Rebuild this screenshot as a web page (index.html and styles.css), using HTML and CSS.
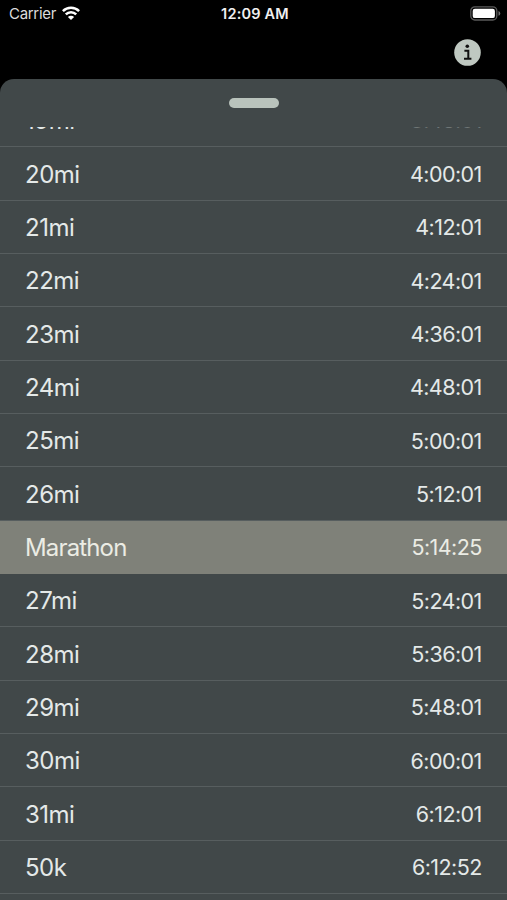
FILE: index.html
```html
<!DOCTYPE html>
<html lang="en">
<head>
<meta charset="utf-8">
<title>Race splits</title>
<link rel="stylesheet" href="styles.css">
</head>
<body>
<header class="status">
  <div class="carrier"><span>Carrier</span>
    <svg class="wifi" width="18" height="14" viewBox="0 0 18 14"><g fill="none" stroke="#fff" stroke-width="2.5"><path d="M.9 5.1a11.5 11.5 0 0 1 16.2 0"/><path d="M3.8 8.4a7.3 7.3 0 0 1 10.4 0"/></g><path fill="#fff" d="M5.9 11a4.4 4.4 0 0 1 6.2 0L9 14z"/></svg>
  </div>
  <div class="clock">12:09 AM</div>
  <svg class="battery" width="31" height="15" viewBox="0 0 31 15"><rect x=".8" y=".8" width="26" height="13.2" rx="4" fill="none" stroke="#5b5b5b" stroke-width="1.3"/><rect x="2.7" y="2.7" width="22.2" height="9.4" rx="2.2" fill="#fff"/><path d="M28.5 5v4.8q1.8-.7 1.8-2.4T28.5 5z" fill="#707070"/></svg>
</header>
<div class="toolbar">
  <svg class="info" width="27" height="27" viewBox="0 0 27 27"><circle cx="13.5" cy="13.5" r="13.3" fill="#bfc8c1"/><circle cx="13.3" cy="7.2" r="1.8" fill="#111"/><path d="M10.4 11.7h3.9v8.1M10 19.8h7.4" fill="none" stroke="#111" stroke-width="2"/></svg>
</div>
<main class="sheet">
  <div class="grip-area"><div class="grip"></div></div>
  <div class="viewport">
    <ul class="splits">
      <li class="leaving"><span>19mi</span><time>3:48:01</time></li>
      <li><span>20mi</span><time>4:00:01</time></li>
      <li><span>21mi</span><time>4:12:01</time></li>
      <li><span>22mi</span><time>4:24:01</time></li>
      <li><span>23mi</span><time>4:36:01</time></li>
      <li><span>24mi</span><time>4:48:01</time></li>
      <li><span>25mi</span><time>5:00:01</time></li>
      <li><span>26mi</span><time>5:12:01</time></li>
      <li class="selected"><span>Marathon</span><time>5:14:25</time></li>
      <li><span>27mi</span><time>5:24:01</time></li>
      <li><span>28mi</span><time>5:36:01</time></li>
      <li><span>29mi</span><time>5:48:01</time></li>
      <li><span>30mi</span><time>6:00:01</time></li>
      <li><span>31mi</span><time>6:12:01</time></li>
      <li><span>50k</span><time>6:12:52</time></li>
      <li></li>
    </ul>
  </div>
</main>
</body>
</html>
```
FILE: styles.css
```css
* { box-sizing: border-box; }
body {
  margin: 0;
  height: 900px;
  overflow: hidden;
  display: flex;
  flex-direction: column;
  background: #000;
  color: #e4e9e8;
  font-family: Inter, "Liberation Sans", sans-serif;
}
.status {
  height: 27px;
  flex: none;
  display: grid;
  grid-template-columns: 1fr auto 1fr;
  align-items: center;
  padding: 0 6px 0 9px;
  font-size: 15px;
}
.carrier { display: flex; align-items: center; gap: 6px; color: #dcdcdc; letter-spacing: -0.3px; }
.wifi { margin-top: -1px; }
.clock { font-weight: 600; font-size: 14.5px; letter-spacing: 0.2px; color: #f0f0f0; }
.battery { justify-self: end; }
.toolbar {
  height: 52px;
  flex: none;
  display: flex;
  justify-content: flex-end;
  align-items: center;
  padding: 0 26px 2px 0;
}
.sheet {
  flex: 1;
  min-height: 0;
  display: flex;
  flex-direction: column;
  background: #414849;
  border-radius: 14px 14px 0 0;
}
.grip-area { height: 48px; flex: none; padding-top: 19px; }
.grip { width: 50px; height: 10px; margin: 0 auto; border-radius: 5px; background: #b9c3bc; }
.viewport { flex: 1; min-height: 0; overflow: hidden; }
.splits { list-style: none; margin: -33.1px 0 0; padding: 0; }
.splits li {
  height: 53.333px;
  display: flex;
  justify-content: space-between;
  align-items: center;
  padding: 1.4px 25.2px 0 25px;
  border-bottom: 1px solid #575e5f;
  font-size: 24px;
  letter-spacing: -0.5px;
}
.splits time { font-size: 21.5px; letter-spacing: -0.55px; }
.splits .leaving span { padding-bottom: 1px; }
.splits .leaving time { padding-bottom: 1.6px; color: #6f7676; }
.splits .selected { background: #7f8179; border-color: #7f8179; color: #ebece4; }
.splits .selected span { letter-spacing: -0.85px; }
```
